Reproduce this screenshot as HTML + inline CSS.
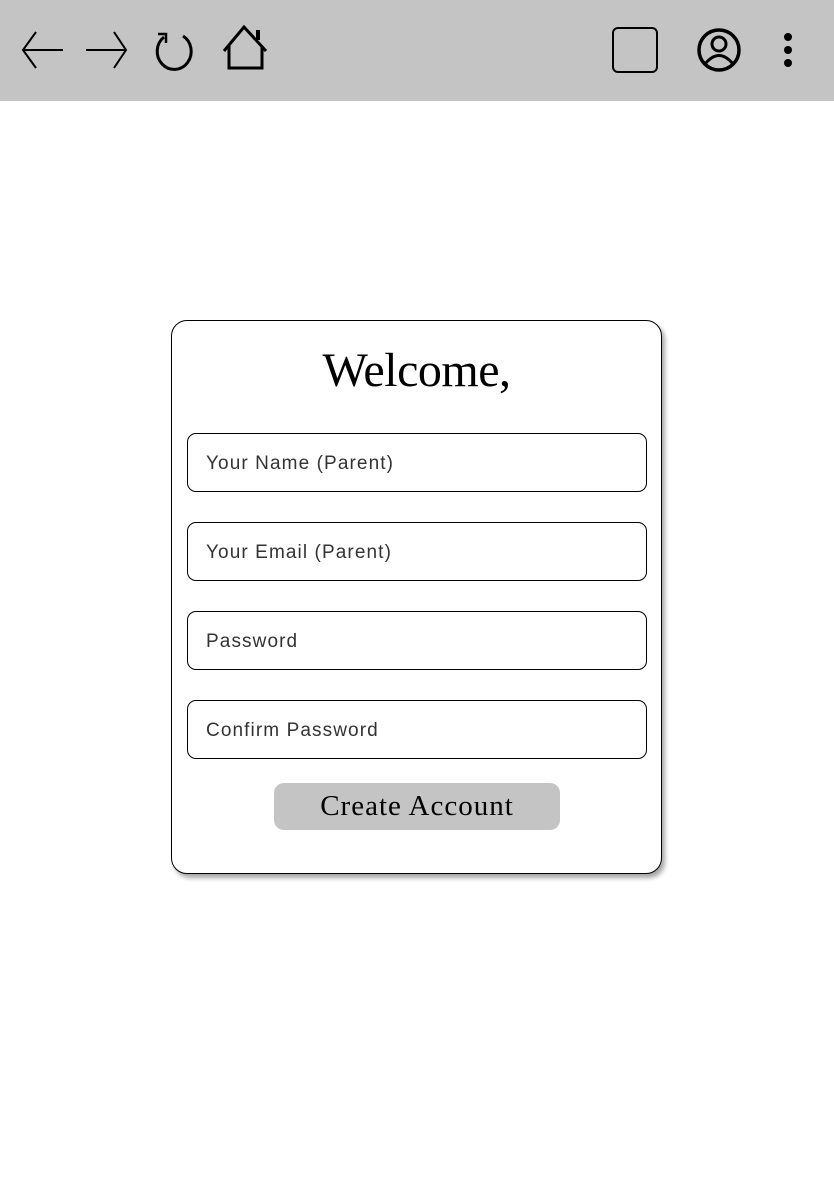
<!DOCTYPE html>
<html><head><meta charset="utf-8"><style>
*{box-sizing:border-box;margin:0;padding:0}
body{width:834px;height:1194px;background:#fff;position:relative;overflow:hidden;font-family:"Liberation Sans",sans-serif}
.bar{position:absolute;left:0;top:0;width:834px;height:101px;background:#c4c4c4}
svg{position:absolute}
.card{position:absolute;left:171px;top:320px;width:491px;height:554px;border:1px solid #000;border-radius:16px;background:#fff;box-shadow:3px 4px 5px rgba(0,0,0,.35)}
h1{position:absolute;left:0;width:100%;top:22px;text-align:center;font-family:"Liberation Serif",serif;font-weight:normal;font-size:48px;color:#000;letter-spacing:-0.5px}
.in{position:absolute;left:15px;width:460px;height:59px;border:1px solid #000;border-radius:9px;font-size:19px;color:#333;padding-left:18px;line-height:59px;letter-spacing:1.1px}
.btn{position:absolute;left:102px;top:462px;width:286px;height:47px;background:#c4c4c4;border-radius:10px;text-align:center;font-family:"Liberation Serif",serif;font-size:29px;line-height:47px;color:#000;letter-spacing:1px}
</style></head><body>
<div class="bar"></div>
<svg width="834" height="101" viewBox="0 0 834 101" fill="none" stroke="#000" stroke-width="2">
<path d="M63 50H23M36 32L23 50L36 68"/>
<path d="M86 50H126M114 32L126 50L114 68"/>
<path d="M183 36A17 18 0 1 1 164 37" stroke-width="3"/><path d="M158 34H166V43" stroke-width="2.5"/>
<path d="M224 51L244 27L266 51M229 46V68H262V46" stroke-width="3"/><path d="M258 30V40" stroke-width="4"/>
<rect x="613" y="28" width="44" height="44" rx="5"/>
<circle cx="719" cy="50" r="20" stroke-width="3.5"/><circle cx="719" cy="44" r="7" stroke-width="3"/><path d="M705 64Q719 47 733 64" stroke-width="3"/>
<circle cx="788" cy="37" r="4" fill="#000" stroke="none"/><circle cx="788" cy="50" r="4" fill="#000" stroke="none"/><circle cx="788" cy="63" r="4" fill="#000" stroke="none"/>
</svg>
<div class="card">
<h1>Welcome,</h1>
<div class="in" style="top:112px">Your Name (Parent)</div>
<div class="in" style="top:201px">Your Email (Parent)</div>
<div class="in" style="top:290px">Password</div>
<div class="in" style="top:379px">Confirm Password</div>
<div class="btn">Create Account</div>
</div>
</body></html>
